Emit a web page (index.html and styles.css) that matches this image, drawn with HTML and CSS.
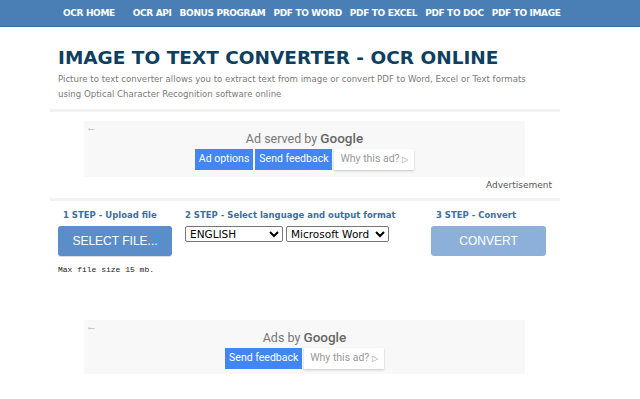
FILE: index.html
```html
<!DOCTYPE html>
<html>
  <head>
    <title>Image to Text Converter - OCR Online</title>
    <link rel="stylesheet" href="styles.css">
  </head>

  <body>
    <nav class="topnav">
      <div class="topnav-links">
        <a href="#" class="home-link">OCR HOME</a>
        <a href="#">OCR API</a>
        <a href="#">BONUS PROGRAM</a>
        <a href="#">PDF TO WORD</a>
        <a href="#">PDF TO EXCEL</a>
        <a href="#">PDF TO DOC</a>
        <a href="#">PDF TO IMAGE</a>
      </div>
    </nav>

    <div class="page">
      <h1 class="page-title">IMAGE TO TEXT CONVERTER - OCR ONLINE</h1>
      <p class="page-lead">
        Picture to text converter allows you to extract text from image or convert PDF to Word, Excel or Text formats<br>
        using Optical Character Recognition software online
      </p>
      <div class="divider"></div>

      <!-- top ad -->
      <div class="ad-box">
        <span class="ad-back">&larr;</span>
        <div class="ad-title">Ad served by <span class="ad-google">Google</span></div>
        <div class="ad-buttons">
          <span class="ad-btn ad-btn-blue">Ad options</span>
          <span class="ad-btn ad-btn-blue">Send feedback</span>
          <span class="ad-btn ad-btn-white">Why this ad? <span class="ad-play">&#9655;</span></span>
        </div>
      </div>
      <div class="ad-label">Advertisement</div>
      <div class="divider"></div>

      <!-- steps -->
      <div class="steps">
        <div class="step">
          <div class="step-title step-title-pad">1 STEP - Upload file</div>
          <button class="btn-select">SELECT FILE...</button>
          <div class="file-note">Max file size 15 mb.</div>
        </div>
        <div class="step">
          <div class="step-title">2 STEP - Select language and output format</div>
          <div class="step-selects">
            <select class="sel-lang">
              <option>ENGLISH</option>
            </select>
            <select class="sel-format">
              <option>Microsoft Word (docx)</option>
            </select>
          </div>
        </div>
        <div class="step">
          <div class="step-title step-title-pad">3 STEP - Convert</div>
          <button class="btn-convert">CONVERT</button>
        </div>
      </div>

      <!-- bottom ad -->
      <div class="ad-box ad-box-bottom">
        <span class="ad-back">&larr;</span>
        <div class="ad-title">Ads by <span class="ad-google">Google</span></div>
        <div class="ad-buttons">
          <span class="ad-btn ad-btn-blue">Send feedback</span>
          <span class="ad-btn ad-btn-white">Why this ad? <span class="ad-play">&#9655;</span></span>
        </div>
      </div>
    </div>
  </body>
</html>
```

FILE: styles.css
```css
body {
  margin: 0;
  background-color: #fff;
  font-family: "DejaVu Sans", Verdana, sans-serif;
}

/* Top navigation */
.topnav {
  background-color: #4a7fb5;
  border-bottom: 1px solid #3c6d9e;
  height: 26px;
}

.topnav-links {
  display: flex;
  align-items: center;
  height: 26px;
  padding-left: 63px;
  gap: 8px;
}

.topnav-links a {
  color: #fff;
  text-decoration: none;
  font-size: 9px;
  font-weight: bold;
  letter-spacing: -0.35px;
}

.topnav-links .home-link {
  margin-right: 10px;
}

/* Page body */
.page {
  width: 510px;
  margin-left: 50px;
}

.page-title {
  margin: 20px 0 0 8px;
  font-size: 18.5px;
  font-weight: bold;
  color: #0e3f5e;
}

.page-lead {
  margin: 4px 0 0 8px;
  font-size: 8.6px;
  line-height: 15px;
  color: #7a7a7a;
  white-space: nowrap;
}

.divider {
  height: 3px;
  background-color: #f2f2f2;
  margin-top: 7px;
}

/* Ad boxes */
.ad-box {
  position: relative;
  margin: 9px 35px 0 34px;
  height: 56px;
  background-color: #f8f8f8;
  font-family: Roboto, Arial, sans-serif;
  text-align: center;
}

.ad-back {
  position: absolute;
  left: 2px;
  top: 0;
  font-size: 11px;
  color: #aaa;
}

.ad-title {
  padding-top: 9px;
  font-size: 12.5px;
  line-height: 16px;
  color: #777;
}

.ad-google {
  font-size: 13.5px;
  font-weight: 500;
  color: #666;
}

.ad-buttons {
  display: flex;
  justify-content: center;
  gap: 2px;
  margin-top: 2px;
}

.ad-btn {
  font-size: 10.5px;
  line-height: 20px;
  padding: 0 4px;
}

.ad-btn-blue {
  background-color: #4285f4;
  color: #fff;
}

.ad-btn-white {
  background-color: #fff;
  color: #999;
  box-shadow: 0 1px 2px rgba(0, 0, 0, 0.2);
  padding: 0 6px;
}

.ad-play {
  font-size: 8px;
}

.ad-label {
  text-align: right;
  margin: 2px 8px 0 0;
  font-size: 9px;
  line-height: 12px;
  color: #555;
}

.ad-box-bottom {
  margin-top: 46px;
  height: 54px;
}

/* Steps */
.steps {
  display: grid;
  grid-template-columns: 127px 246px 1fr;
  padding-left: 8px;
  margin-top: 8px;
}

.step-title {
  font-size: 8.5px;
  font-weight: bold;
  color: #3e6f9b;
  line-height: 12px;
  margin-bottom: 5px;
}

.step-title-pad {
  padding-left: 5px;
}

.btn-select,
.btn-convert {
  width: 114px;
  height: 30px;
  border: none;
  border-radius: 3px;
  color: #fff;
  font-family: "Liberation Sans", Arial, sans-serif;
  font-size: 12px;
  cursor: pointer;
}

.btn-select {
  background-color: #5b8ec9;
  box-shadow: 0 1px 1px rgba(0, 0, 0, 0.15);
}

.btn-convert {
  width: 115px;
  background-color: #8db0da;
}

.file-note {
  font-family: "Liberation Mono", "Courier New", monospace;
  font-size: 8px;
  margin-top: 9px;
  color: #222;
}

.step-selects {
  display: flex;
  gap: 3px;
}

.step-selects select {
  height: 16px;
  font-family: "DejaVu Sans", Verdana, sans-serif;
  font-size: 10.5px;
  border: 1px solid #767676;
  border-radius: 2px;
  padding: 0;
  background-color: #fff;
}

.sel-lang {
  width: 98px;
}

.sel-format {
  width: 103px;
}
```
